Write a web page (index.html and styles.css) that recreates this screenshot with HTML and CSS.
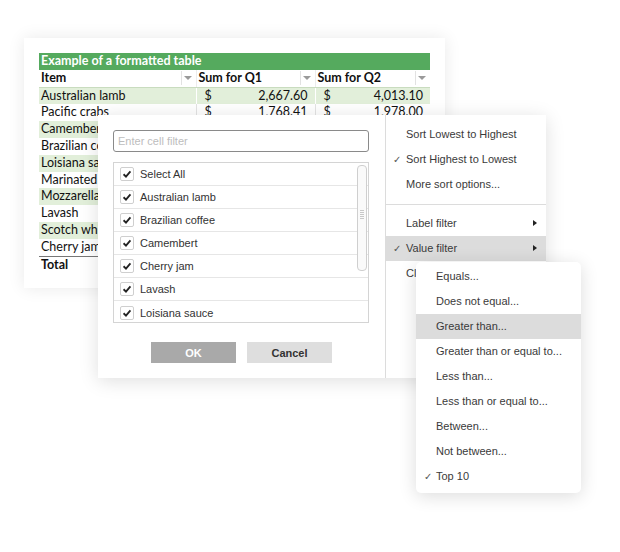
FILE: index.html
```html
<!DOCTYPE html>
<html>
<head>
<meta charset="utf-8">
<link rel="stylesheet" href="styles.css">
</head>
<body>
<div class="stage">
  <div class="sheet">
    <table class="grid">
      <colgroup><col class="c1"><col class="c2"><col class="c3"></colgroup>
      <tr class="title"><td colspan="3">Example of a formatted table</td></tr>
      <tr class="head">
        <td><div class="hcell"><span>Item</span><span class="dd"></span></div></td>
        <td><div class="hcell"><span>Sum for Q1</span><span class="dd"></span></div></td>
        <td><div class="hcell"><span>Sum for Q2</span><span class="dd"></span></div></td>
      </tr>
      <tr class="band"><td>Australian lamb</td><td><div class="money"><span>$</span><span>2,667.60</span></div></td><td><div class="money"><span>$</span><span>4,013.10</span></div></td></tr>
      <tr><td>Pacific crabs</td><td><div class="money"><span>$</span><span>1,768.41</span></div></td><td><div class="money"><span>$</span><span>1,978.00</span></div></td></tr>
      <tr class="band"><td>Camembert</td><td></td><td></td></tr>
      <tr><td>Brazilian coffee</td><td></td><td></td></tr>
      <tr class="band"><td>Loisiana sauce</td><td></td><td></td></tr>
      <tr><td>Marinated</td><td></td><td></td></tr>
      <tr class="band"><td>Mozzarella</td><td></td><td></td></tr>
      <tr><td>Lavash</td><td></td><td></td></tr>
      <tr class="band"><td>Scotch whisky</td><td></td><td></td></tr>
      <tr><td>Cherry jam</td><td></td><td></td></tr>
      <tr class="total"><td>Total</td><td></td><td></td></tr>
    </table>
  </div>

  <div class="popup">
    <div class="filter">
      <div class="search">Enter cell filter</div>
      <div class="list">
        <div class="row"><span class="cb"><svg viewBox="0 0 14 14"><path d="M3 7.3 L5.8 10 L11 4" fill="none" stroke="#222" stroke-width="2.1"/></svg></span>Select All</div>
        <div class="row"><span class="cb"><svg viewBox="0 0 14 14"><path d="M3 7.3 L5.8 10 L11 4" fill="none" stroke="#222" stroke-width="2.1"/></svg></span>Australian lamb</div>
        <div class="row"><span class="cb"><svg viewBox="0 0 14 14"><path d="M3 7.3 L5.8 10 L11 4" fill="none" stroke="#222" stroke-width="2.1"/></svg></span>Brazilian coffee</div>
        <div class="row"><span class="cb"><svg viewBox="0 0 14 14"><path d="M3 7.3 L5.8 10 L11 4" fill="none" stroke="#222" stroke-width="2.1"/></svg></span>Camembert</div>
        <div class="row"><span class="cb"><svg viewBox="0 0 14 14"><path d="M3 7.3 L5.8 10 L11 4" fill="none" stroke="#222" stroke-width="2.1"/></svg></span>Cherry jam</div>
        <div class="row"><span class="cb"><svg viewBox="0 0 14 14"><path d="M3 7.3 L5.8 10 L11 4" fill="none" stroke="#222" stroke-width="2.1"/></svg></span>Lavash</div>
        <div class="row last"><span class="cb"><svg viewBox="0 0 14 14"><path d="M3 7.3 L5.8 10 L11 4" fill="none" stroke="#222" stroke-width="2.1"/></svg></span>Loisiana sauce</div>
        <div class="scroll"><span class="grip"></span></div>
      </div>
      <div class="buttons">
        <div class="btn ok">OK</div>
        <div class="btn cancel">Cancel</div>
      </div>
    </div>
    <div class="menu">
      <div class="item">Sort Lowest to Highest</div>
      <div class="item checked">Sort Highest to Lowest</div>
      <div class="item">More sort options...</div>
      <div class="sep"></div>
      <div class="item sub">Label filter</div>
      <div class="item sub checked active">Value filter</div>
      <div class="item">Clear filter</div>
    </div>
  </div>

  <div class="submenu">
    <div class="item">Equals...</div>
    <div class="item">Does not equal...</div>
    <div class="item active">Greater than...</div>
    <div class="item">Greater than or equal to...</div>
    <div class="item">Less than...</div>
    <div class="item">Less than or equal to...</div>
    <div class="item">Between...</div>
    <div class="item">Not between...</div>
    <div class="item checked">Top 10</div>
  </div>
</div>
</body>
</html>
```

FILE: styles.css
```css
html, body {
  margin: 0;
  padding: 0;
  background: #fff;
}
.stage {
  position: relative;
  width: 620px;
  height: 552px;
  overflow: hidden;
  font-family: "Liberation Sans", Arial, sans-serif;
}

/* spreadsheet card */
.sheet {
  position: absolute;
  left: 24px;
  top: 38px;
  width: 391px;
  height: 220px;
  padding: 15px;
  background: #fff;
  box-shadow: 0 0 16px rgba(0, 0, 0, 0.09);
}
.grid {
  border-collapse: collapse;
  table-layout: fixed;
  width: 391px;
  font-family: Lato, "Liberation Sans", sans-serif;
  font-size: 12.5px;
  color: #111;
}
.c1 { width: 157px; }
.c2 { width: 119px; }
.c3 { width: 115px; }
.grid td {
  height: 16.8px;
  padding: 0 2px;
  line-height: 16.8px;
  white-space: nowrap;
  overflow: hidden;
  box-sizing: border-box;
}
.grid td + td { border-left: 1px solid #e3e3e3; }
.grid .title td {
  background: #55aa5e;
  color: #fff;
  font-weight: bold;
  font-size: 12.5px;
}
.grid .head td {
  font-weight: bold;
  border-bottom: 1px solid #c9dcbf;
}
.grid .head td + td { border-left: 1px solid #ececec; }
.hcell {
  display: flex;
  align-items: center;
  justify-content: space-between;
}
.dd {
  width: 12px;
  height: 14px;
  border-left: 1px solid #e2e2e2;
  position: relative;
}
.dd::after {
  content: "";
  position: absolute;
  left: 2px;
  top: 5px;
  border-left: 4px solid transparent;
  border-right: 4px solid transparent;
  border-top: 4px solid #9a9a9a;
}
.grid .band td { background: #e2efda; }
.grid .band td + td { border-left: 1px solid #fff; }
.money {
  display: flex;
  justify-content: space-between;
  padding: 0 5px 0 6px;
}
.grid .total td {
  font-weight: bold;
  border-top: 1px solid #777;
}

/* popup */
.popup {
  position: absolute;
  left: 98px;
  top: 115px;
  width: 448px;
  height: 263px;
  display: flex;
  background: #fff;
  box-shadow: 0 3px 18px rgba(0, 0, 0, 0.13);
  color: #333;
  font-size: 11px;
}
.filter {
  width: 287px;
  padding: 15px 0 0 15px;
  box-sizing: border-box;
}
.search {
  width: 256px;
  height: 22px;
  box-sizing: border-box;
  border: 1px solid #8a8a8a;
  border-radius: 3px;
  padding: 0 4px;
  line-height: 20px;
  color: #bdbdbd;
  font-size: 11px;
}
.list {
  position: relative;
  margin-top: 10px;
  width: 256px;
  height: 161px;
  box-sizing: border-box;
  border: 1px solid #d4d4d4;
}
.row {
  display: flex;
  align-items: center;
  height: 23px;
  box-sizing: border-box;
  border-bottom: 1px solid #e6e6e6;
  padding-left: 6px;
  color: #333;
}
.row.last { border-bottom: none; }
.cb {
  width: 14px;
  height: 14px;
  box-sizing: border-box;
  border: 1px solid #cfcfcf;
  border-radius: 2px;
  margin-right: 6px;
  display: flex;
}
.cb svg { width: 12px; height: 12px; }
.scroll {
  position: absolute;
  right: 1px;
  top: 2px;
  width: 10px;
  height: 106px;
  box-sizing: border-box;
  border: 1px solid #cfcfcf;
  border-radius: 4px;
  background: #fafafa;
}
.grip {
  position: absolute;
  left: 2px;
  top: 44px;
  width: 4px;
  height: 10px;
  background: repeating-linear-gradient(#c8c8c8 0 1px, transparent 1px 2px);
}
.buttons {
  display: flex;
  gap: 11px;
  margin-top: 19px;
  padding-left: 38px;
}
.btn {
  width: 85px;
  height: 21px;
  line-height: 22px;
  text-align: center;
  font-weight: bold;
  font-size: 11px;
}
.ok { background: #a9a9a9; color: #fff; }
.cancel { background: #dedede; color: #333; }

.menu {
  flex: 1;
  border-left: 1px solid #dcdcdc;
  padding-top: 7px;
}
.item {
  position: relative;
  height: 25px;
  line-height: 25px;
  padding-left: 20px;
  color: #3a3a3a;
  white-space: nowrap;
}
.item.checked::before {
  content: "\2713";
  position: absolute;
  left: 7px;
  top: 0;
  font-family: "DejaVu Sans", sans-serif;
  font-size: 10px;
  color: #555;
}
.item.sub::after {
  content: "";
  position: absolute;
  right: 9px;
  top: 9px;
  border-top: 3.5px solid transparent;
  border-bottom: 3.5px solid transparent;
  border-left: 4px solid #222;
}
.item.active { background: #dcdcdc; }
.sep {
  height: 1px;
  margin: 7px 0 6px;
  background: #dcdcdc;
}

.submenu {
  position: absolute;
  left: 416px;
  top: 262px;
  width: 165px;
  height: 231px;
  box-sizing: border-box;
  padding-top: 2px;
  background: #fff;
  border-radius: 5px;
  box-shadow: 0 3px 18px rgba(0, 0, 0, 0.14);
  font-size: 11px;
  overflow: hidden;
}
.submenu .item.checked::before { left: 8px; }
```
